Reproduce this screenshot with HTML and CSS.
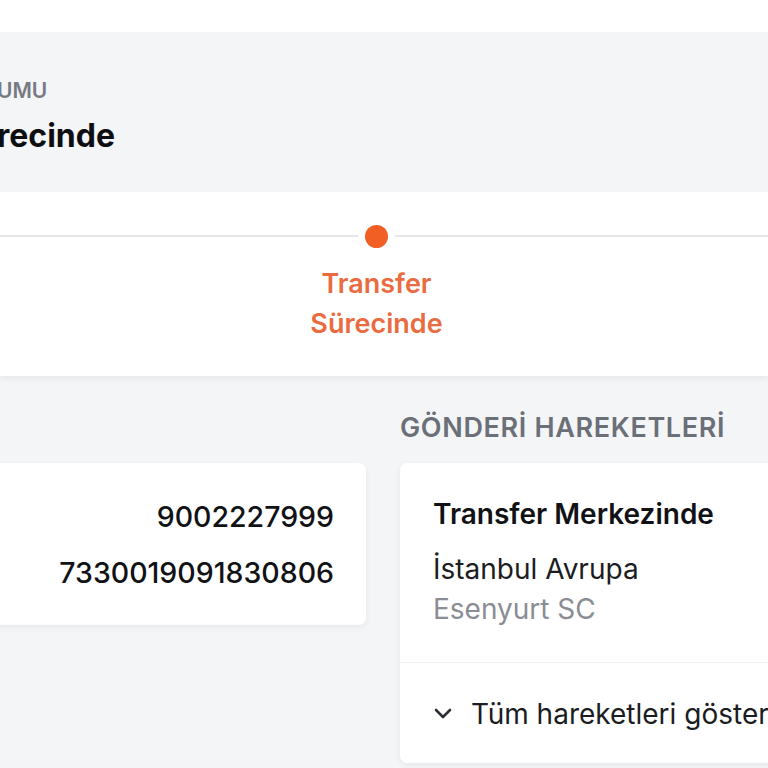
FILE: index.html
```html
<!DOCTYPE html>
<html lang="tr">
<head>
<meta charset="utf-8">
<link rel="stylesheet" href="styles.css">
</head>
<body>
<div class="page">
  <header class="topbar"></header>
  <section class="status">
    <div class="status-label">UMU</div>
    <div class="status-title">recinde</div>
  </section>
  <section class="timeline">
    <div class="track"></div>
    <div class="step">
      <span class="dot"></span>
      <div class="step-label">Transfer<br>Sürecinde</div>
    </div>
  </section>
  <section class="content">
    <div class="col col-left">
      <div class="col-head"></div>
      <div class="card info-card">
        <div class="info-row">9002227999</div>
        <div class="info-row">7330019091830806</div>
      </div>
    </div>
    <div class="col col-right">
      <h2 class="col-head">GÖNDERİ HAREKETLERİ</h2>
      <div class="card moves-card">
        <div class="move">
          <div class="move-title">Transfer Merkezinde</div>
          <div class="move-city">İstanbul Avrupa</div>
          <div class="move-branch">Esenyurt SC</div>
        </div>
        <div class="show-all">
          <svg class="chev" width="20" height="12" viewBox="0 0 20 12"><path d="M3 2 L10 9 L17 2" fill="none" stroke="#2b2f36" stroke-width="2.6" stroke-linecap="round" stroke-linejoin="round"/></svg>
          <span>Tüm hareketleri göster</span>
        </div>
      </div>
    </div>
  </section>
</div>
</body>
</html>
```

FILE: styles.css
```css
* { box-sizing: border-box; }
html, body {
  margin: 0;
  padding: 0;
  background: #f4f5f7;
  font-family: Inter, "Noto Sans", sans-serif;
  color: #111216;
  overflow: hidden;
  height: 768px;
}
.page {
  width: 768px;
  height: 768px;
  overflow: hidden;
}
.topbar {
  height: 32px;
  background: #ffffff;
}
.status {
  height: 160px;
  background: #f4f5f7;
  padding-top: 45px;
}
.status-label {
  font-size: 21px;
  line-height: 28px;
  font-weight: 600;
  color: #767a82;
  margin-left: -3px;
  white-space: nowrap;
}
.status-title {
  font-size: 32px;
  line-height: 40px;
  font-weight: 700;
  color: #0d0e12;
  margin-top: 11px;
  margin-left: -3px;
  white-space: nowrap;
}
.timeline {
  position: relative;
  height: 184px;
  background: #ffffff;
  box-shadow: 0 3px 6px rgba(0, 0, 0, 0.05);
  padding-top: 33px;
  display: flex;
  justify-content: flex-start;
}
.track {
  position: absolute;
  left: 0;
  right: 0;
  top: 43px;
  height: 2px;
  background: #e6e7ea;
}
.step {
  position: relative;
  margin-left: 286px;
  width: 181px;
  display: flex;
  flex-direction: column;
  align-items: center;
}
.dot {
  width: 23px;
  height: 23px;
  border-radius: 50%;
  background: #f15f24;
  box-shadow: 0 0 0 7px #ffffff;
}
.step-label {
  margin-top: 16px;
  text-align: center;
  font-size: 27px;
  line-height: 40px;
  font-weight: 600;
  color: #ea6b40;
}
.content {
  display: flex;
  gap: 34px;
  margin-left: -100px;
  padding-top: 36px;
}
.col-left { flex: 0 0 466px; }
.col-right { flex: 0 0 540px; }
.col-head {
  height: 32px;
  margin: 0 0 19px 0;
  font-size: 27px;
  line-height: 32px;
  font-weight: 600;
  color: #6b6f77;
  letter-spacing: 0.65px;
  white-space: nowrap;
}
.card {
  background: #ffffff;
  border-radius: 7px;
  box-shadow: 0 2px 6px rgba(0, 0, 0, 0.06);
}
.info-card {
  height: 162px;
  padding: 26px 32px 24px 32px;
  text-align: right;
}
.info-row {
  font-size: 28.5px;
  line-height: 56px;
  font-weight: 500;
  color: #111216;
}
.moves-card {
  height: 300px;
}
.move {
  padding: 34px 33px 33px 33px;
  border-bottom: 1px solid #f1f2f4;
}
.move-title {
  font-size: 28px;
  line-height: 34px;
  font-weight: 600;
  color: #111216;
  white-space: nowrap;
}
.move-city {
  margin-top: 18px;
  font-size: 28px;
  line-height: 40px;
  font-weight: 400;
  color: #1b1d22;
}
.move-branch {
  font-size: 28px;
  line-height: 40px;
  font-weight: 400;
  color: #8a8d93;
}
.show-all {
  display: flex;
  align-items: center;
  gap: 18px;
  padding: 31px 0 0 33px;
  font-size: 28px;
  line-height: 40px;
  color: #1b1d22;
  white-space: nowrap;
}
.chev { flex: 0 0 20px; }
```
